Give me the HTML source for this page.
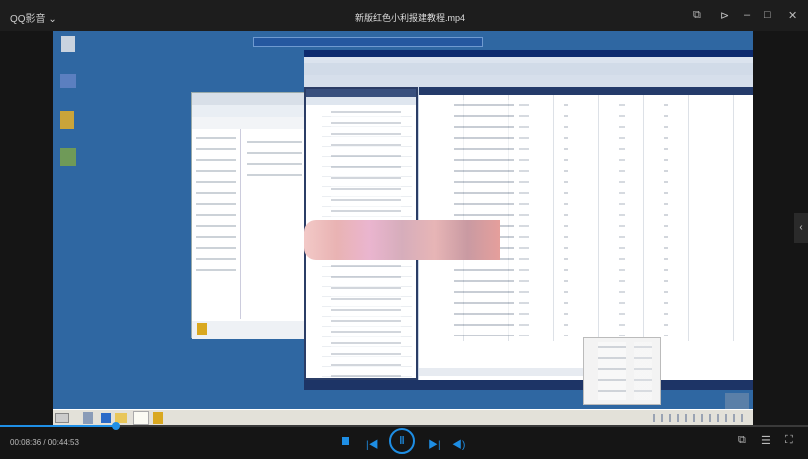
<!DOCTYPE html>
<html><head><meta charset="utf-8"><style>
*{margin:0;padding:0;box-sizing:border-box}
body{width:808px;height:459px;background:#151515;position:relative;overflow:hidden;font-family:"Liberation Sans","Noto Sans CJK SC",sans-serif;color:#ccc}
.a{position:absolute}
.lines{background:repeating-linear-gradient(#fff 0 9px,#e6eaef 9px 10px)}
.cols{background:repeating-linear-gradient(90deg,transparent 0 44px,#dde1e7 44px 45px)}
.txt{background:repeating-linear-gradient(#fff 0 4px,#9aa4b2 4px 6px,#fff 6px 11px)}
.ic{position:absolute;top:9px;font-size:11px;color:#bbb}
</style></head><body>
<div class="a" style="left:0;top:0;width:808px;height:31px;background:#1d1d1d"></div>
<div class="a" style="left:10px;top:10px;font-size:10px;color:#ccc">QQ影音 ⌄</div>
<div class="a" style="left:355px;top:11px;font-size:9px;color:#ddd">新版红色小利报建教程.mp4</div>
<div class="ic" style="left:693px">⧉</div>
<div class="ic" style="left:720px">⊳</div>
<div class="ic" style="left:744px">–</div>
<div class="ic" style="left:764px">□</div>
<div class="ic" style="left:788px">✕</div>
<div class="a" style="left:53px;top:31px;width:700px;height:395px;background:#2f67a2">
  <div class="a" style="left:8px;top:5px;width:14px;height:16px;background:#c9d3df"></div>
  <div class="a" style="left:7px;top:43px;width:16px;height:14px;background:#5b7fc0"></div>
  <div class="a" style="left:7px;top:80px;width:14px;height:18px;background:#caa43a"></div>
  <div class="a" style="left:7px;top:117px;width:16px;height:18px;background:#6f9a58"></div>
  <div class="a" style="left:200px;top:6px;width:230px;height:10px;background:#2558a0;border:1px solid #6f9ad0"></div>
  <div class="a" style="left:138px;top:61px;width:116px;height:246px;background:#fff;border:1px solid #9aa">
    <div style="height:12px;background:#d8dfe8"></div>
    <div style="height:12px;background:#e9eef4"></div>
    <div style="height:12px;background:#f2f4f7"></div>
    <div class="a txt" style="left:4px;top:40px;width:40px;height:140px;opacity:.5"></div>
    <div class="a" style="left:48px;top:36px;width:1px;height:190px;background:#ccd"></div>
    <div class="a txt" style="left:55px;top:44px;width:55px;height:40px;opacity:.5"></div>
    <div class="a" style="left:0;top:228px;width:116px;height:18px;background:#eef1f5"></div>
    <div class="a" style="left:5px;top:230px;width:10px;height:12px;background:#d9a820"></div>
  </div>
  <div class="a" style="left:251px;top:19px;width:449px;height:340px;background:#c7d3e3">
    <div style="height:7px;background:#0c2a6e"></div>
    <div style="height:6px;background:#dbe3ee"></div>
    <div style="height:12px;background:#d1dbe8"></div>
    <div style="height:12px;background:#d6dfeb"></div>
    <div class="a" style="left:0;top:37px;width:114px;height:293px;background:#fff;border:2px solid #2b3d66">
      <div style="height:8px;background:#39507e"></div>
      <div style="height:8px;background:#dfe6ef"></div>
      <div class="a lines" style="left:16px;top:18px;width:90px;height:270px;opacity:.8"></div>
      <div class="a txt" style="left:25px;top:18px;width:70px;height:270px;opacity:.45"></div>
    </div>
    <div class="a" style="left:115px;top:37px;width:334px;height:8px;background:#243b6a"></div>
    <div class="a cols" style="left:115px;top:45px;width:334px;height:246px;background-color:#fff"></div>
    <div class="a txt" style="left:150px;top:50px;width:60px;height:236px;opacity:.55"></div>
    <div class="a txt" style="left:215px;top:50px;width:10px;height:236px;opacity:.4"></div>
    <div class="a txt" style="left:260px;top:50px;width:4px;height:236px;opacity:.45"></div>
    <div class="a txt" style="left:315px;top:50px;width:6px;height:236px;opacity:.4"></div>
    <div class="a txt" style="left:360px;top:50px;width:4px;height:236px;opacity:.45"></div>
    <div class="a" style="left:115px;top:291px;width:334px;height:39px;background:#fff"></div>
    <div class="a" style="left:115px;top:318px;width:200px;height:8px;background:#e7ebf1"></div>
    <div class="a" style="left:0;top:330px;width:449px;height:10px;background:#1d3466"></div>
  </div>
  <div class="a" style="left:251px;top:189px;width:196px;height:40px;background:linear-gradient(90deg,#f2c9c7,#e9b3b3,#eab5cf,#d6adbb,#e7b5b6,#c99aa2,#e59f9c);border-radius:12px 0 0 12px"></div>
  <div class="a" style="left:530px;top:306px;width:78px;height:68px;background:#f3f3f3;border:1px solid #bbb">
    <div class="a txt" style="left:14px;top:4px;width:28px;height:58px;opacity:.4"></div>
    <div class="a txt" style="left:50px;top:4px;width:18px;height:58px;opacity:.3"></div>
  </div>
  <div class="a" style="left:672px;top:362px;width:24px;height:16px;background:#5a7fa8"></div>
  <div class="a" style="left:0;top:378px;width:700px;height:17px;background:#e3e1d9;border-top:1px solid #fff">
    <div class="a" style="left:2px;top:3px;width:14px;height:10px;background:#ccc;border:1px solid #888"></div>
    <div class="a" style="left:30px;top:2px;width:10px;height:12px;background:#8a9cb8"></div>
    <div class="a" style="left:48px;top:3px;width:10px;height:10px;background:#2b6bc8"></div>
    <div class="a" style="left:62px;top:3px;width:12px;height:10px;background:#e8c65a"></div>
    <div class="a" style="left:80px;top:1px;width:16px;height:14px;background:#fbfbf3;border:1px solid #aaa"></div>
    <div class="a" style="left:100px;top:2px;width:10px;height:12px;background:#d9a820"></div>
    <div class="a" style="left:600px;top:4px;width:95px;height:8px;background:repeating-linear-gradient(90deg,#9aa3b3 0 2px,transparent 2px 8px)"></div>
  </div>
</div>
<div class="a" style="left:794px;top:213px;width:14px;height:30px;background:#2a2a2a;color:#ccc;font-size:10px;line-height:30px;text-align:center">‹</div>
<div class="a" style="left:0;top:425px;width:808px;height:2px;background:#3a3a3a"></div>
<div class="a" style="left:0;top:425px;width:116px;height:2px;background:#1f8fe6"></div>
<div class="a" style="left:112px;top:422px;width:8px;height:8px;border-radius:50%;background:#1f8fe6"></div>
<div class="a" style="left:10px;top:438px;font-size:8px;color:#bbb">00:08:36 / 00:44:53</div>
<div class="a" style="left:342px;top:437px;width:7px;height:8px;background:#1e8ee4"></div>
<div class="a" style="left:366px;top:436px;font-size:10px;color:#1e8ee4">|◀</div>
<div class="a" style="left:389px;top:428px;width:26px;height:26px;border:2px solid #1e8ee4;border-radius:50%;color:#1e8ee4;font-size:11px;line-height:22px;text-align:center;font-weight:bold">‖</div>
<div class="a" style="left:428px;top:436px;font-size:10px;color:#1e8ee4">▶|</div>
<div class="a" style="left:452px;top:436px;font-size:10px;color:#1e8ee4">◀)</div>
<div class="a" style="left:738px;top:434px;font-size:11px;color:#bbb">⧉</div>
<div class="a" style="left:761px;top:434px;font-size:11px;color:#bbb">☰</div>
<div class="a" style="left:785px;top:434px;font-size:11px;color:#bbb">⛶</div>
</body></html>
